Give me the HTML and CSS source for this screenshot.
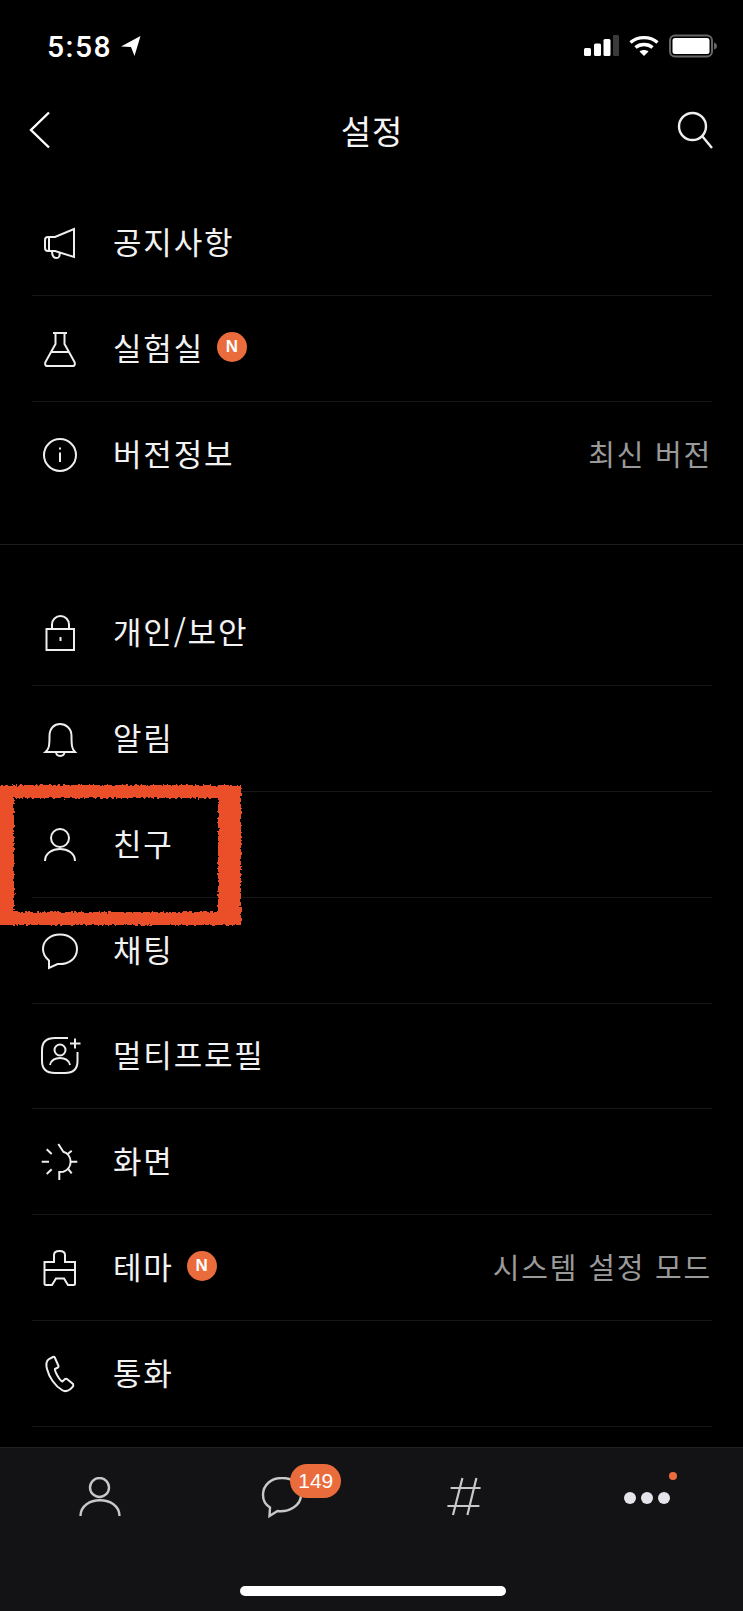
FILE: index.html
```html
<!DOCTYPE html>
<html lang="ko">
<head>
  <meta charset="UTF-8" />
  <title>설정</title>
  <meta name="viewport" content="width=device-width, initial-scale=1.0" />
  <link rel="stylesheet" href="styles.css">
</head>
<body>
<div class="phone">

  <!-- STATUS BAR -->
  <div class="status">
    <div class="clock">5:58
      <svg width="20" height="20" viewBox="0 0 20 20"><path d="M19.500 0 0 10.500 10 11 13.500 20Z" fill="#fff"/></svg>
    </div>
    <div class="status-icons">
      <svg width="35" height="22" viewBox="0 0 35 22"><rect x="0" y="13" width="7" height="8" rx="1.500" fill="#fff"/><rect x="10" y="8.500" width="7" height="12.500" rx="1.500" fill="#fff"/><rect x="19.500" y="4" width="7" height="17" rx="1.500" fill="#fff"/><rect x="29" y="0" width="6" height="21" rx="1" fill="#3a3a3a"/></svg>
      <svg width="30" height="22" viewBox="0 0 30 22" fill="none" stroke="#fff" stroke-width="3.400"><path d="M1.500 7.500C9 1 21 1 28.500 7.500"/><path d="M6.500 12.500C11 8.500 19 8.500 23.500 12.500"/><path d="M15 21 10.500 16.500C13 14.500 17 14.500 19.500 16.500Z" fill="#fff" stroke="none"/></svg>
      <svg width="48" height="24" viewBox="0 0 48 24"><rect x="1" y="1.500" width="42" height="21" rx="5" fill="none" stroke="#666" stroke-width="2"/><rect x="3.500" y="4" width="37" height="16" rx="2.500" fill="#fff"/><path d="M45 8.500C47 9 48 10.500 48 12S47 15 45 15.500Z" fill="#666"/></svg>
    </div>
  </div>

  <!-- TOP BAR -->
  <div class="topbar">
    <svg width="22" height="38" viewBox="0 0 22 38" fill="none" stroke="#fff" stroke-width="2.400"><path d="M20 1.500 2 19 20 36.500"/></svg>
    <h1>설정</h1>
    <svg width="36" height="38" viewBox="0 0 36 38" fill="none" stroke="#eee" stroke-width="2.400"><circle cx="15.500" cy="15.500" r="13.500"/><path d="M25.500 25.500 35 37"/></svg>
  </div>

  <!-- GROUP 1 -->
  <div class="group">
    <div class="row">
      <svg class="ico" viewBox="0 0 36 36"><path d="M32 4V32L13 26H6C4 26 3 25 3 23V15C3 13 4 12 6 12H13Z"/><path d="M7 12V26M10 26C10 31 12 33 14.500 33S18 31 17.500 28"/></svg>
      <span class="label">공지사항</span>
    </div>
    <div class="row">
      <svg class="ico" viewBox="0 0 36 36"><path d="M11 2H25M13.500 2V13L3.500 31C2.500 33 3.500 35 5 35H31C32.500 35 33.500 33 32.500 31L22.500 13V2M8.500 21H27.500"/></svg>
      <span class="label">실험실</span>
      <span class="new">N</span>
    </div>
    <div class="row">
      <svg class="ico" viewBox="0 0 36 36"><circle cx="18" cy="18" r="16"/><path d="M18 15.500V25M18 10.500V12.500"/></svg>
      <span class="label">버전정보</span>
      <span class="value">최신 버전</span>
    </div>
  </div>

  <!-- GROUP 2 -->
  <div class="group second">
    <div class="row">
      <svg class="ico" viewBox="0 0 36 36"><path d="M4.500 14H32V35H4.500ZM10 14V9.500A8.500 8.500 0 0 1 27 9.500V14M18.500 22V26"/></svg>
      <span class="label">개인/보안</span>
    </div>
    <div class="row">
      <svg class="ico" viewBox="0 0 36 36"><path d="M3.500 31C7 28 7.500 25 7.500 15C7.500 7 12.500 3 18 3S29.500 7 29.500 15C29.500 25 30 28 33 31ZM14 31.500C14.500 36 22 36 22.500 31.500"/></svg>
      <span class="label">알림</span>
    </div>
    <div class="row">
      <svg class="ico" viewBox="0 0 36 36"><circle cx="18" cy="11" r="9"/><path d="M3 34C3 18 33 18 33 34"/></svg>
      <span class="label">친구</span>
    </div>
    <div class="row">
      <svg class="ico" viewBox="0 0 36 36"><path d="M18 1.500C8 1.500 1 8 1 16C1 21.500 4 25 7 27.500V35L15.500 31C26 32 35 26 35 16C35 8 28 1.500 18 1.500Z"/></svg>
      <span class="label">채팅</span>
    </div>
    <div class="row">
      <svg class="ico wide" viewBox="0 0 40 40"><path d="M27 2H14C5 2 1 6 1 14V25C1 33 5 37 14 37H24C32.500 37 36.500 33 36.500 25V16"/><circle cx="19" cy="14" r="5.500"/><path d="M9 29C10.500 19.500 27.500 19.500 29 29M34 2.500V12.500M29 7.500H39.500"/></svg>
      <span class="label">멀티프로필</span>
    </div>
    <div class="row">
      <svg class="ico wide" viewBox="0 0 40 40"><path d="M17.300 2 22.300 9.700A10.500 10.500 0 0 1 22.300 29.700L18.300 30V38M30.700 8.700 26.700 12M29.700 19.700H36.300M26.700 26.300 30.700 31.300M10.700 27.300 5.700 32M.7 19.700H8M5.700 7.300 10.700 12"/></svg>
      <span class="label">화면</span>
    </div>
    <div class="row">
      <svg class="ico" viewBox="0 0 36 36"><path d="M12 12V5C12 2 15 1 17.500 1S23 2 23 5V12H33V33.500C33 34.500 32.500 35 31.500 35H26L22 28.500H14L10 35H4C3 35 2.500 34.500 2.500 33.500V12ZM2.500 20H33"/></svg>
      <span class="label">테마</span>
      <span class="new">N</span>
      <span class="value">시스템 설정 모드</span>
    </div>
    <div class="row">
      <svg class="ico" viewBox="0 0 36 36"><path d="M11 1 7 3C4 5 4 9 5 13C7 21 13 30 20 34C23 36 26 35 28.500 33L31 30.500C31.500 29.500 31.500 29 31 28L25 23C24 22.500 23.500 22.500 23 23L20.500 25.500C18 25 12.500 15.500 13 13L16 11.500C16.500 11 16.500 10.500 16.500 10L13 2C12.500 1 12 .5 11 1Z"/></svg>
      <span class="label">통화</span>
    </div>
  </div>

  <!-- TAB BAR -->
  <div class="tabbar">
    <div class="tabs">
      <div class="tab">
        <svg width="42" height="42" viewBox="0 0 42 42" fill="none" stroke="#c8c8c8" stroke-width="2.400"><circle cx="20.500" cy="10.500" r="9.500"/><path d="M1.500 39C1.500 18 40.500 18 40.500 39"/></svg>
      </div>
      <div class="tab">
        <svg width="42" height="42" viewBox="0 0 42 42" fill="none" stroke="#c8c8c8" stroke-width="2.400"><path d="M21 1C10 1 2 8 2 18C2 24 5 28 9 30.500L8.500 39L16.500 34C28 35.500 40 28.500 40 18C40 8 32 1 21 1Z"/></svg>
        <span class="count">149</span>
      </div>
      <div class="tab">
        <svg width="36" height="42" viewBox="0 0 36 42" fill="none" stroke="#c8c8c8" stroke-width="2.200"><path d="M15.400 1 6 38M29.400 1 20.400 38M3.600 11H33.600M.4 29H32.400"/></svg>
      </div>
      <div class="tab">
        <span class="dot"></span><span class="dot"></span><span class="dot"></span>
        <span class="tab-alert"></span>
      </div>
    </div>
    <div class="home"></div>
  </div>

  <!-- marker box drawn on top of the screenshot, the filter roughens its edges -->
  <svg class="defs" width="0" height="0"><filter id="rough" x="-5%" y="-5%" width="110%" height="110%"><feTurbulence type="fractalNoise" baseFrequency="0.35" numOctaves="2" seed="4"/><feDisplacementMap in="SourceGraphic" scale="5"/></filter></svg>
  <div class="marker"></div>
</div>
</body>
</html>
```
FILE: styles.css
```css
* {
  box-sizing: border-box;
}
html, body {
  margin: 0;
  background-color: #000;
}
body {
  font-family: "Noto Sans CJK KR", "Noto Sans", sans-serif;
  color: #f2f2f2;
}
.phone {
  position: relative;
  width: 743px;
  height: 1611px;
  overflow: hidden;
  display: flex;
  flex-direction: column;
  background-color: #000;
}
.status {
  height: 90px;
  padding: 30px 26px 0 47px;
  display: flex;
  justify-content: space-between;
}
.clock {
  display: flex;
  gap: 9px;
  height: 32px;
  align-items: center;
  font-family: Roboto, sans-serif;
  font-size: 30px;
  font-weight: 500;
  letter-spacing: 1.5px;
  color: #fff;
}
.status-icons {
  display: flex;
  gap: 10px;
  height: 32px;
  align-items: center;
}
.defs {
  position: absolute;
}
.topbar {
  height: 80px;
  padding: 0 30px 0 29px;
  display: flex;
  align-items: center;
  justify-content: space-between;
}
.topbar h1 {
  margin: 0 0 0 16px;
  font-size: 33px;
  font-weight: 400;
  letter-spacing: 1px;
  color: #f4f4f4;
}
.group {
  padding: 20px 0 37px;
  border-bottom: 1px solid #1c1c1c;
}
.second {
  padding-top: 35px;
  border-bottom: 0;
}
.row {
  height: 105.8px;
  margin: 0 31px 0 32px;
  padding-bottom: 3px;
  display: flex;
  align-items: center;
  border-bottom: 1px solid #161616;
}
.group .row:last-child {
  border-bottom: 0;
}
.second .row:last-child {
  border-bottom: 1px solid #161616;
}
.ico {
  width: 36px;
  height: 36px;
  margin: 4px 35px 0 10px;
  flex: none;
  fill: none;
  stroke: #eee;
  stroke-width: 2;
  overflow: visible;
}
.wide {
  width: 40px;
  height: 40px;
  margin: 4px 32px 0 9px;
}
.label {
  font-size: 31px;
  line-height: 40px;
  letter-spacing: 1.8px;
  color: #f2f2f2;
}
.new {
  width: 30px;
  height: 30px;
  margin-left: 13px;
  border-radius: 50%;
  background-color: #ea6c3c;
  color: #fff;
  font-family: "Liberation Sans", sans-serif;
  font-size: 17px;
  font-weight: bold;
  display: flex;
  align-items: center;
  justify-content: center;
}
.value {
  margin-left: auto;
  font-size: 29px;
  letter-spacing: 1.8px;
  color: #9a9a9a;
}
.tabbar {
  position: absolute;
  left: 0;
  right: 0;
  bottom: 0;
  height: 164px;
  background-color: #131315;
  border-top: 1px solid #222;
}
.tabs {
  height: 100px;
  display: flex;
  padding: 0 5px 0 9px;
}
.tab {
  position: relative;
  flex: 1;
  display: flex;
  align-items: center;
  justify-content: center;
  gap: 5px;
}
.count {
  position: absolute;
  left: 99px;
  top: 16px;
  width: 51px;
  height: 34px;
  border-radius: 17px;
  background-color: #ea6c3c;
  color: #fff;
  font-family: "Liberation Sans", sans-serif;
  font-size: 21px;
  line-height: 34px;
  text-align: center;
}
.dot {
  width: 12px;
  height: 12px;
  border-radius: 50%;
  background-color: #e4e4ea;
}
.tab-alert {
  position: absolute;
  left: 113px;
  top: 24px;
  width: 8px;
  height: 8px;
  border-radius: 50%;
  background-color: #ea6c3c;
}
.home {
  width: 266px;
  height: 10px;
  margin: 38px 0 0 240px;
  border-radius: 5px;
  background-color: #fff;
}
.marker {
  position: absolute;
  left: -8px;
  top: 785px;
  width: 249px;
  height: 140px;
  border: 13px solid #ea4f2b;
  border-left-width: 22px;
  border-right-width: 23px;
  filter: url(#rough);
}
```
